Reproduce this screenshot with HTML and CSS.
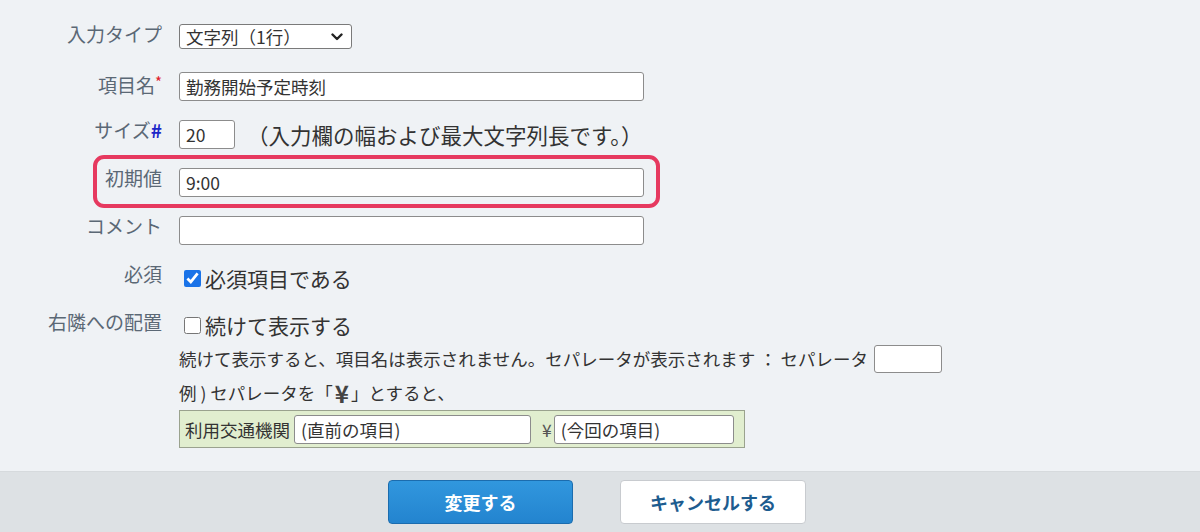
FILE: index.html
```html
<html lang="ja">
<head>
    <meta charset="UTF-8" />
    <meta name="viewport" content="width=device-width, initial-scale=1.0" />
    <title>項目の変更</title>
    <link rel="stylesheet" href="styles.css">
</head>
<body>
    <div class="form">
      <div class="row">
        <label class="label">入力タイプ</label>
        <div class="field">
          <span class="select-wrap">
            <select class="select">
              <option>文字列（1行）</option>
            </select>
            <svg class="chevron" width="12" height="8" viewBox="0 0 12 8">
              <path d="M1.5 1.5 L6 6 L10.5 1.5" fill="none" stroke="#222" stroke-width="2.4" stroke-linecap="round" stroke-linejoin="round" />
            </svg>
          </span>
        </div>
      </div>

      <div class="row">
        <label class="label">項目名<span class="req">*</span></label>
        <div class="field">
          <input type="text" class="text wide" value="勤務開始予定時刻" />
        </div>
      </div>

      <div class="row">
        <label class="label">サイズ<span class="hash">#</span></label>
        <div class="field">
          <input type="text" class="text size" value="20" />
          <span class="note">（入力欄の幅および最大文字列長です。）</span>
        </div>
      </div>

      <div class="row highlight">
        <label class="label">初期値</label>
        <div class="field">
          <input type="text" class="text wide" value="9:00" />
        </div>
      </div>

      <div class="row">
        <label class="label">コメント</label>
        <div class="field">
          <input type="text" class="text wide" value="" />
        </div>
      </div>

      <div class="row">
        <label class="label">必須</label>
        <div class="field">
          <label class="check"><input type="checkbox" checked />必須項目である</label>
        </div>
      </div>

      <div class="row last">
        <label class="label">右隣への配置</label>
        <div class="field stack">
          <label class="check"><input type="checkbox" />続けて表示する</label>
          <div class="help">
            続けて表示すると、項目名は表示されません。セパレータが表示されます ： セパレータ
            <input type="text" class="text sep" value="" />
          </div>
          <div class="help example">例 ) セパレータを「<b class="yen">¥</b>」とすると、</div>
          <div class="sample">
            <span>利用交通機関</span>
            <input type="text" class="text prev" value="(直前の項目)" />
            <span class="sample-sep">¥</span>
            <input type="text" class="text cur" value="(今回の項目)" />
          </div>
        </div>
      </div>
    </div>

    <div class="footer">
      <button class="btn primary">変更する</button>
      <button class="btn">キャンセルする</button>
    </div>
</body>
</html>
```

FILE: styles.css
```css
body {
    margin: 0;
    font-family: "Noto Sans CJK JP", "Noto Sans", sans-serif;
    line-height: 1.2;
    background-color: #eff2f5;
    color: #333;
}

.form {
    padding: 24px 0 23px 0;
}

.row {
    display: grid;
    grid-template-columns: 162px 1fr;
    column-gap: 17px;
    min-height: 29px;
    margin-bottom: 19px;
}

.row.last {
    margin-bottom: 0;
}

.row.highlight {
    position: relative;
}

.row.highlight::after {
    content: "";
    position: absolute;
    left: 93px;
    top: -13px;
    width: 559px;
    height: 45px;
    border: 4px solid #e6395f;
    border-radius: 11px;
    pointer-events: none;
}

.label {
    text-align: right;
    font-size: 19px;
    line-height: 20px;
    color: #5b6875;
    white-space: nowrap;
}

.req {
    color: #e0202a;
    font-size: 15px;
    vertical-align: 5px;
}

.hash {
    color: #1c28c8;
    font-weight: bold;
}

.field {
    display: flex;
    align-items: center;
    align-self: start;
    min-height: 29px;
}

.field.stack {
    flex-direction: column;
    align-items: flex-start;
}

.text {
    box-sizing: border-box;
    height: 29px;
    padding: 0 6px;
    border: 1px solid #8c8c8c;
    border-radius: 3px;
    background-color: #ffffff;
    font-family: inherit;
    font-size: 17.5px;
    color: #333;
    outline: none;
}

.wide {
    width: 465px;
}

.size {
    width: 56px;
}

.note {
    margin-left: 12px;
    font-size: 21.5px;
    line-height: 1;
    color: #333;
}

.select-wrap {
    position: relative;
    display: inline-block;
    align-self: flex-start;
}

.select {
    appearance: none;
    box-sizing: border-box;
    width: 173px;
    height: 25px;
    padding: 0 6px;
    border: 1px solid #7a7a7a;
    border-radius: 3px;
    background-color: #ffffff;
    font-family: inherit;
    font-size: 17.5px;
    line-height: 23px;
    color: #333;
}

.chevron {
    position: absolute;
    right: 9px;
    top: 9px;
    pointer-events: none;
}

.check {
    display: flex;
    align-items: center;
    font-size: 21px;
    line-height: 1;
    color: #333;
    height: 27px;
}

.check input {
    width: 17px;
    height: 17px;
    margin: 0 4px 0 5px;
    accent-color: #1a73e8;
}

.help {
    display: flex;
    align-items: center;
    font-size: 17.5px;
    line-height: 1;
    color: #333;
    height: 28px;
    margin-top: 6px;
    white-space: nowrap;
}

.sep {
    width: 68px;
    height: 28px;
    margin-left: 6px;
}

.example {
    margin-top: 8px;
    height: 24px;
}

.yen {
    font-size: 24px;
    font-weight: bold;
    color: #444;
    margin: 0 2px;
}

.sample {
    display: flex;
    align-items: center;
    gap: 4px;
    box-sizing: border-box;
    width: 566px;
    height: 38px;
    margin-top: 5px;
    padding: 0 6px 0 5px;
    border: 1px solid #9aa28e;
    background-color: #e1eecf;
    font-size: 17.5px;
    color: #333;
}

.prev {
    width: 237px;
    height: 29px;
    margin-left: 0;
}

.sample-sep {
    margin-left: 7px;
    color: #555;
}

.cur {
    width: 180px;
    height: 29px;
    margin-left: -2px;
}

.footer {
    display: flex;
    justify-content: center;
    gap: 47px;
    padding: 8px 6px 8px 0;
    background-color: #dde1e4;
    border-top: 1px solid #d6dadd;
}

.btn {
    width: 186px;
    height: 44px;
    border: 1px solid #c8cbcf;
    border-radius: 4px;
    background-color: #ffffff;
    font-family: inherit;
    font-size: 18px;
    font-weight: bold;
    color: #1d5c8f;
    cursor: pointer;
}

.btn.primary {
    width: 185px;
    border-color: #1b6cae;
    background: linear-gradient(180deg, #3197de 0%, #2384cf 100%);
    color: #ffffff;
}
```
